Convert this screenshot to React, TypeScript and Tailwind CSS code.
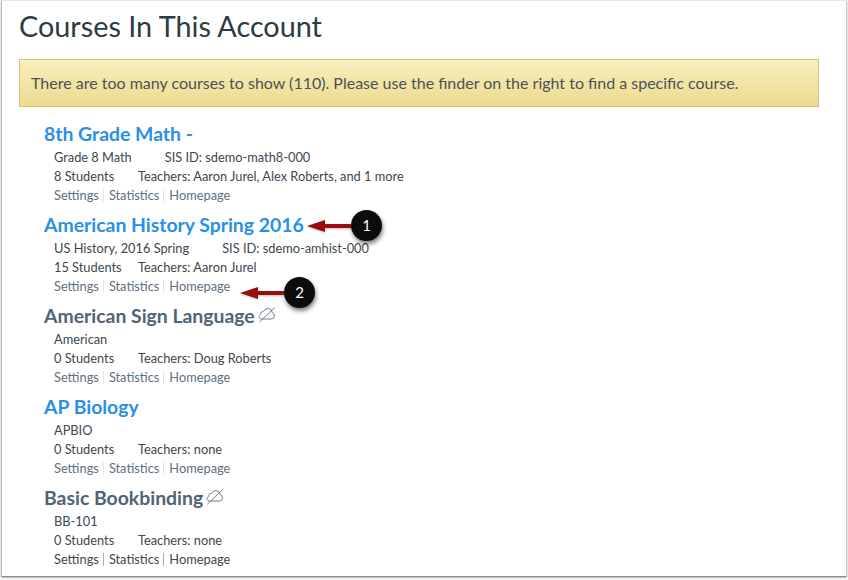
const courses = [
  { name: "8th Grade Math -", code: "Grade 8 Math", sis: "SIS ID: sdemo-math8-000", students: "8 Students", teachers: "Teachers: Aaron Jurel, Alex Roberts, and 1 more", published: true },
  { name: "American History Spring 2016", code: "US History, 2016 Spring", sis: "SIS ID: sdemo-amhist-000", students: "15 Students", teachers: "Teachers: Aaron Jurel", published: true },
  { name: "American Sign Language", code: "American", students: "0 Students", teachers: "Teachers: Doug Roberts", published: false },
  { name: "AP Biology", code: "APBIO", students: "0 Students", teachers: "Teachers: none", published: true },
  { name: "Basic Bookbinding", code: "BB-101", students: "0 Students", teachers: "Teachers: none", published: false, darkLinks: true },
];

function HiddenIcon() {
  return (
    <svg width="18" height="17" viewBox="0 0 18 17" fill="none" stroke="#6f7f8c" strokeWidth="1" className="ml-[3px] mt-[-3px]">
      <path d="M4 13H13.2a3.2 3.2 0 0 0 1.2-6.2 4.6 4.6 0 0 0-8.8-1.5 3.1 3.1 0 0 0-3 3.2A2.7 2.7 0 0 0 1 10.6 2.5 2.5 0 0 0 4 13Z" />
      <path d="M1.5 16 16.8 1.5" />
    </svg>
  );
}

function Callout({ n, className, width }: { n: number; className: string; width: number }) {
  return (
    <div className={`absolute flex items-center ${className}`}>
      <svg width={width} height="14" viewBox={`0 0 ${width} 14`} className="drop-shadow-[0_1px_1px_rgba(0,0,0,0.25)]">
        <path d={`M0 7 18 1V5H${width}V9H18V13Z`} fill="#990d0d" />
      </svg>
      <div className="flex h-[31px] w-[31px] shrink-0 items-center justify-center rounded-full bg-[#0c0c0c] text-[15px] text-white shadow-[1px_3px_4px_rgba(0,0,0,0.5)]">
        {n}
      </div>
    </div>
  );
}

export default function App() {
  return (
    <div className="h-[580px] w-[848px] overflow-hidden bg-white font-['Lato','Liberation_Sans',sans-serif]">
      <div className="relative ml-[1px] h-[577px] w-[846px] border-t border-l border-r border-b border-t-[#e6e6e6] border-l-[#bdbdbd] border-r-[#c9c9c9] border-b-[#8c8c8c] pl-[17px] pr-[27px] shadow-[0_1px_2px_rgba(0,0,0,0.3)]">
        <h1 className="mt-[7px] text-[28.8px] leading-[36px] font-normal text-[#2d3b45]">Courses In This Account</h1>

        <div className="mt-[15px] h-[48px] border border-[#d3c27f] bg-gradient-to-b from-[#f9eebd] to-[#eddb8f] pl-[11px] text-[16px] leading-[46px] text-[#4c5257]">
          There are too many courses to show (110). Please use the finder on the right to find a specific course.
        </div>

        <ul className="ml-[25px] mt-[12px]">
          {courses.map((c) => (
            <li key={c.name} className="h-[91px]">
              <div className={`flex h-[30px] items-center text-[19.4px] font-bold ${c.published ? "text-[#2a8fe6]" : "text-[#4f6476]"}`}>
                {c.name}
                {!c.published && <HiddenIcon />}
              </div>
              <div className="mt-[-1px] ml-[10px] text-[12.8px] leading-[19px] text-[#3d474e]">
                <div className="h-[19px]">
                  {c.code}
                  {c.sis && <span className="ml-[33px]">{c.sis}</span>}
                </div>
                <div className="flex h-[19px]">
                  <span className="w-[84px]">{c.students}</span>
                  <span>{c.teachers}</span>
                </div>
                <div className={`flex h-[19px] items-center ${c.darkLinks ? "text-[#3d474e]" : "text-[#5d7080]"}`}>
                  <span>Settings</span>
                  <span className={`ml-[4px] mr-[5px] h-[13px] w-px ${c.darkLinks ? "bg-[#9fb0bf]" : "bg-[#e3e6e9]"}`} />
                  <span>Statistics</span>
                  <span className={`ml-[4px] mr-[5px] h-[13px] w-px ${c.darkLinks ? "bg-[#9fb0bf]" : "bg-[#e3e6e9]"}`} />
                  <span>Homepage</span>
                </div>
              </div>
            </li>
          ))}
        </ul>

        <Callout n={1} width={44} className="left-[305px] top-[209px]" />
        <Callout n={2} width={44} className="left-[238px] top-[276px]" />
      </div>
    </div>
  );
}
